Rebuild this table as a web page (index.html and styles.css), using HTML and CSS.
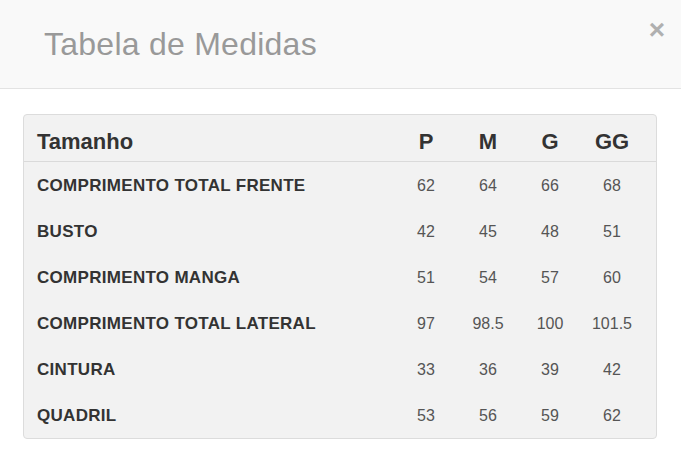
FILE: index.html
```html
<!DOCTYPE html>
<html lang="pt">
<head>
<meta charset="utf-8">
<title>Tabela de Medidas</title>
<link rel="stylesheet" href="styles.css">
</head>
<body>
<div class="modal">
  <div class="modal-header">
    <h4 class="modal-title">Tabela de Medidas</h4>
    <button class="close" type="button" aria-label="Fechar">×</button>
  </div>
  <div class="modal-body">
    <div class="sizes">
      <div class="row head">
        <div class="label">Tamanho</div>
        <div class="cell">P</div>
        <div class="cell">M</div>
        <div class="cell">G</div>
        <div class="cell">GG</div>
      </div>
      <div class="row">
        <div class="label">COMPRIMENTO TOTAL FRENTE</div>
        <div class="cell">62</div><div class="cell">64</div><div class="cell">66</div><div class="cell">68</div>
      </div>
      <div class="row">
        <div class="label">BUSTO</div>
        <div class="cell">42</div><div class="cell">45</div><div class="cell">48</div><div class="cell">51</div>
      </div>
      <div class="row">
        <div class="label">COMPRIMENTO MANGA</div>
        <div class="cell">51</div><div class="cell">54</div><div class="cell">57</div><div class="cell">60</div>
      </div>
      <div class="row">
        <div class="label">COMPRIMENTO TOTAL LATERAL</div>
        <div class="cell">97</div><div class="cell">98.5</div><div class="cell">100</div><div class="cell">101.5</div>
      </div>
      <div class="row">
        <div class="label">CINTURA</div>
        <div class="cell">33</div><div class="cell">36</div><div class="cell">39</div><div class="cell">42</div>
      </div>
      <div class="row">
        <div class="label">QUADRIL</div>
        <div class="cell">53</div><div class="cell">56</div><div class="cell">59</div><div class="cell">62</div>
      </div>
    </div>
  </div>
</div>
</body>
</html>
```

FILE: styles.css
```css
* { box-sizing: border-box; }
html, body {
  margin: 0;
  background: #fff;
  font-family: "Liberation Sans", Arial, sans-serif;
}
.modal {
  width: 681px;
}
.modal-header {
  height: 89px;
  background: #f9f9f9;
  border-bottom: 1px solid #e3e3e3;
  display: flex;
  align-items: flex-start;
  justify-content: space-between;
  padding: 0 16px 0 44px;
}
.modal-title {
  margin: 0;
  padding-top: 25px;
  font-size: 32px;
  font-weight: normal;
  line-height: 38px;
  letter-spacing: 0.25px;
  color: #999;
}
.close {
  border: 0;
  background: none;
  padding: 0;
  margin-top: 14px;
  font-family: "Liberation Sans", Arial, sans-serif;
  font-size: 28px;
  font-weight: bold;
  line-height: 32px;
  color: #b0b0b0;
  cursor: pointer;
}
.modal-body {
  padding: 25px 24px 0 23px;
}
.sizes {
  background: #f2f2f2;
  border: 1px solid #dcdcdc;
  border-radius: 4px;
  padding: 0 13px;
}
.row {
  display: grid;
  grid-template-columns: 1fr 62px 62px 62px 62px;
  align-items: center;
  height: 46px;
  padding-top: 1px;
  font-size: 16px;
  color: #555;
}
.row.head {
  height: 47px;
  padding: 7px 13px 0;
  margin: 0 -13px;
  border-bottom: 1px solid #dadada;
  font-size: 22px;
  font-weight: bold;
  color: #333;
}
.label {
  font-weight: bold;
  color: #333;
  font-size: 17px;
  letter-spacing: 0.3px;
}
.head .label {
  font-size: 22px;
  letter-spacing: 0;
}
.cell {
  text-align: center;
}
```
